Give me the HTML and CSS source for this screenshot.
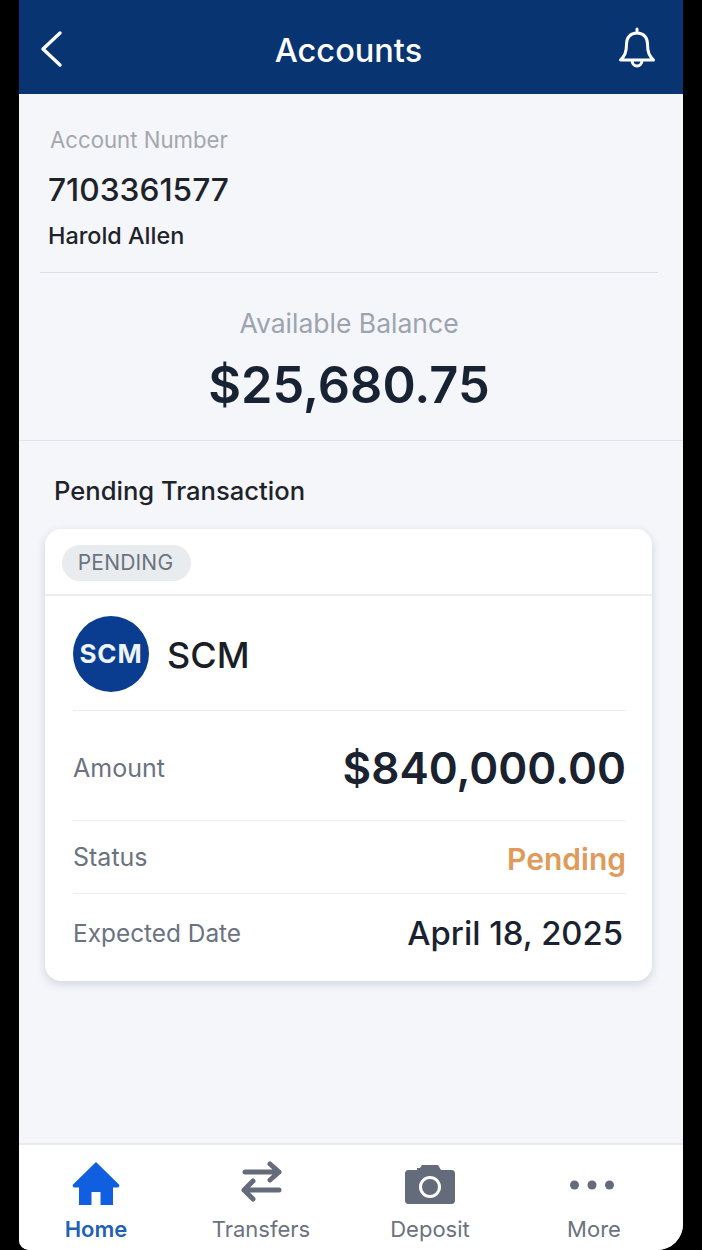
FILE: index.html
```html
<!DOCTYPE html>
<html lang="en">
<head>
<meta charset="utf-8">
<title>Accounts</title>
<link rel="stylesheet" href="styles.css">
</head>
<body>
<div class="screen">
  <header class="topbar">
    <svg class="back" width="26" height="38" viewBox="0 0 26 38" fill="none" stroke="#fff" stroke-width="3.4" stroke-linecap="round" stroke-linejoin="round"><path d="M21 3 4 19l17 16"/></svg>
    <h1 class="title">Accounts</h1>
    <svg class="bell" width="40" height="42" viewBox="0 0 40 42" fill="none" stroke="#fff" stroke-width="3" stroke-linecap="round" stroke-linejoin="round"><path d="M20 2v4M20 6c-7 0-10.500 5-10.500 11 0 9-2 12-6 16h33c-4-4-6-7-6-16 0-6-3.500-11-10.500-11ZM15 33c0 4 2.500 6 5 6s5-2 5-6"/></svg>
  </header>
  <main class="content">
    <section class="account">
      <div class="account-label">Account Number</div>
      <div class="account-number">7103361577</div>
      <div class="account-name">Harold Allen</div>
    </section>
    <section class="balance">
      <div class="balance-label">Available Balance</div>
      <div class="balance-value">$25,680.75</div>
    </section>
    <h2 class="section-title">Pending Transaction</h2>
    <article class="card">
      <div class="card-top"><span class="badge">PENDING</span></div>
      <div class="card-body">
        <div class="merchant">
          <div class="logo">SCM</div>
          <div class="merchant-name">SCM</div>
        </div>
        <div class="row row-amount"><span class="row-label">Amount</span><span class="amount">$840,000.00</span></div>
        <div class="row row-status"><span class="row-label">Status</span><span class="status">Pending</span></div>
        <div class="row row-date"><span class="row-label">Expected Date</span><span class="date">April 18, 2025</span></div>
      </div>
    </article>
  </main>
  <nav class="tabbar">
    <div class="tab tab-active">
      <svg width="50" height="46" viewBox="0 0 50 46"><path fill="#0f5fe0" d="M25 2 2 24.500c-.8 1.500 0 3 1.500 3H8V45h12.500V32h9v13H42V27.500h4.500c1.500 0 2.300-1.500 1.500-3Z"/></svg>
      <span>Home</span>
    </div>
    <div class="tab">
      <svg width="50" height="46" viewBox="0 0 50 46" fill="none" stroke="#646c7b" stroke-width="5" stroke-linecap="round" stroke-linejoin="round"><path d="M9 12h34M34 4l9 8-9 8M43 30H8M17 21l-9 9 9 9"/></svg>
      <span>Transfers</span>
    </div>
    <div class="tab">
      <svg width="50" height="46" viewBox="0 0 50 46"><path fill="#646c7b" fill-rule="evenodd" d="M3 10h9V8h3l2-3h16l3 5h11c1.500 0 3 1.500 3 3v28c0 1.500-1.500 3-3 3H3c-1.500 0-3-1.500-3-3V13c0-1.500 1.500-3 3-3Zm22 6a11 11 0 1 0 0 22 11 11 0 0 0 0-22Zm0 3a8 8 0 1 1 0 16 8 8 0 0 1 0-16Z"/></svg>
      <span>Deposit</span>
    </div>
    <div class="tab">
      <svg width="50" height="46" viewBox="0 0 50 46" fill="#646c7b"><circle cx="5.500" cy="25" r="4.500"/><circle cx="23" cy="25" r="4.500"/><circle cx="40.500" cy="25" r="4.500"/></svg>
      <span>More</span>
    </div>
  </nav>
</div>
</body>
</html>
```
FILE: styles.css
```css
* { box-sizing: border-box; }
html, body { margin: 0; height: 100%; background: #000; }
body { font-family: Inter, "Liberation Sans", sans-serif; overflow: hidden; }
.screen {
  width: 664px; height: 1250px; margin-left: 19px;
  background: #f4f6fa; display: flex; flex-direction: column;
  border-radius: 0 0 26px 10px; overflow: hidden;
}
.topbar {
  height: 94px; flex: none; background: #083571;
  display: flex; align-items: center; justify-content: space-between;
  padding: 0 26px 0 20px; position: relative;
}
.back { margin-top: 4px; }
.bell { margin-top: 2px; }
.title {
  position: absolute; left: 0; right: 0; margin: 0; padding: 6px 5px 0 0; text-align: center;
  color: #fff; font-size: 32.500px; font-weight: 500;
}
.content { flex: 1; min-height: 0; }
.account { margin: 0 25px 0 21px; height: 179px; padding: 32px 0 0 8px; border-bottom: 1px solid #d9deeb; }
.account-label { font-size: 22.200px; line-height: 28px; color: #a4a7ad; padding-left: 2px; }
.account-number { font-size: 31.700px; line-height: 36px; font-weight: 500; color: #1e222a; margin-top: 18px; }
.account-name { font-size: 23.400px; line-height: 30px; font-weight: 500; color: #1e222a; margin-top: 13px; }
.balance { height: 168px; border-bottom: 1px solid #e1e4ec; text-align: center; padding-top: 33px; padding-right: 4px; }
.balance-label { font-size: 26.500px; line-height: 34px; color: #9ca3af; }
.balance-value { font-size: 50.500px; line-height: 64px; font-weight: 600; color: #172233; margin-top: 13px; }
.section-title { margin: 34px 0 0 35px; font-size: 25.600px; line-height: 32px; font-weight: 500; color: #1e222a; }
.card {
  margin: 22px 31px 0 26px; height: 452px; background: #fff; border-radius: 16px;
  box-shadow: 0 3px 10px rgba(60, 75, 110, .2);
}
.card-top { height: 67px; padding: 16px 0 0 17px; border-bottom: 2px solid #eceef2; }
.badge {
  display: inline-block; width: 129px; height: 36px; line-height: 36px; border-radius: 18px;
  background: #e9ecef; color: #6b7280; font-size: 21px; text-align: center; letter-spacing: .2px; padding-right: 2px;
}
.card-body { padding: 0 26px 0 28px; }
.merchant { height: 115px; display: flex; align-items: center; gap: 18px; border-bottom: 1px solid #ebedf0; padding-top: 1px; }
.logo {
  width: 76px; height: 76px; border-radius: 50%; background: #0a3d8f; color: #eef4fb;
  display: flex; align-items: center; justify-content: center; font-size: 26px; font-weight: 700; letter-spacing: .8px;
}
.merchant-name { font-size: 36px; font-weight: 500; color: #1a1e26; padding-top: 2px; }
.row { display: flex; justify-content: space-between; align-items: center; border-bottom: 1px solid #ebedf0; }
.row-amount { height: 110px; padding-top: 4px; }
.row-status { height: 73px; }
.row-date { height: 80px; border-bottom: 0; padding: 0 3px 2px 0; }
.row-label { font-size: 25px; color: #6b7280; }
.row-date .row-label { font-size: 24.400px; }
.amount { font-size: 44px; font-weight: 600; color: #1a2230; }
.status { font-size: 30px; font-weight: 600; color: #e09a5a; padding-top: 4px; }
.date { font-size: 32.800px; font-weight: 500; color: #1a2230; }
.tabbar {
  height: 107px; flex: none; background: #fff; border-top: 2px solid #e8eaef;
  display: grid; grid-template-columns: 154px 176px 162px 166px; padding-top: 15px;
}
.tab { display: flex; flex-direction: column; align-items: center; color: #6b7280; font-size: 22px; line-height: 28px; }
.tab svg { display: block; margin-bottom: 9px; }
.tab-active { color: #1f62b5; font-weight: 600; }
```
